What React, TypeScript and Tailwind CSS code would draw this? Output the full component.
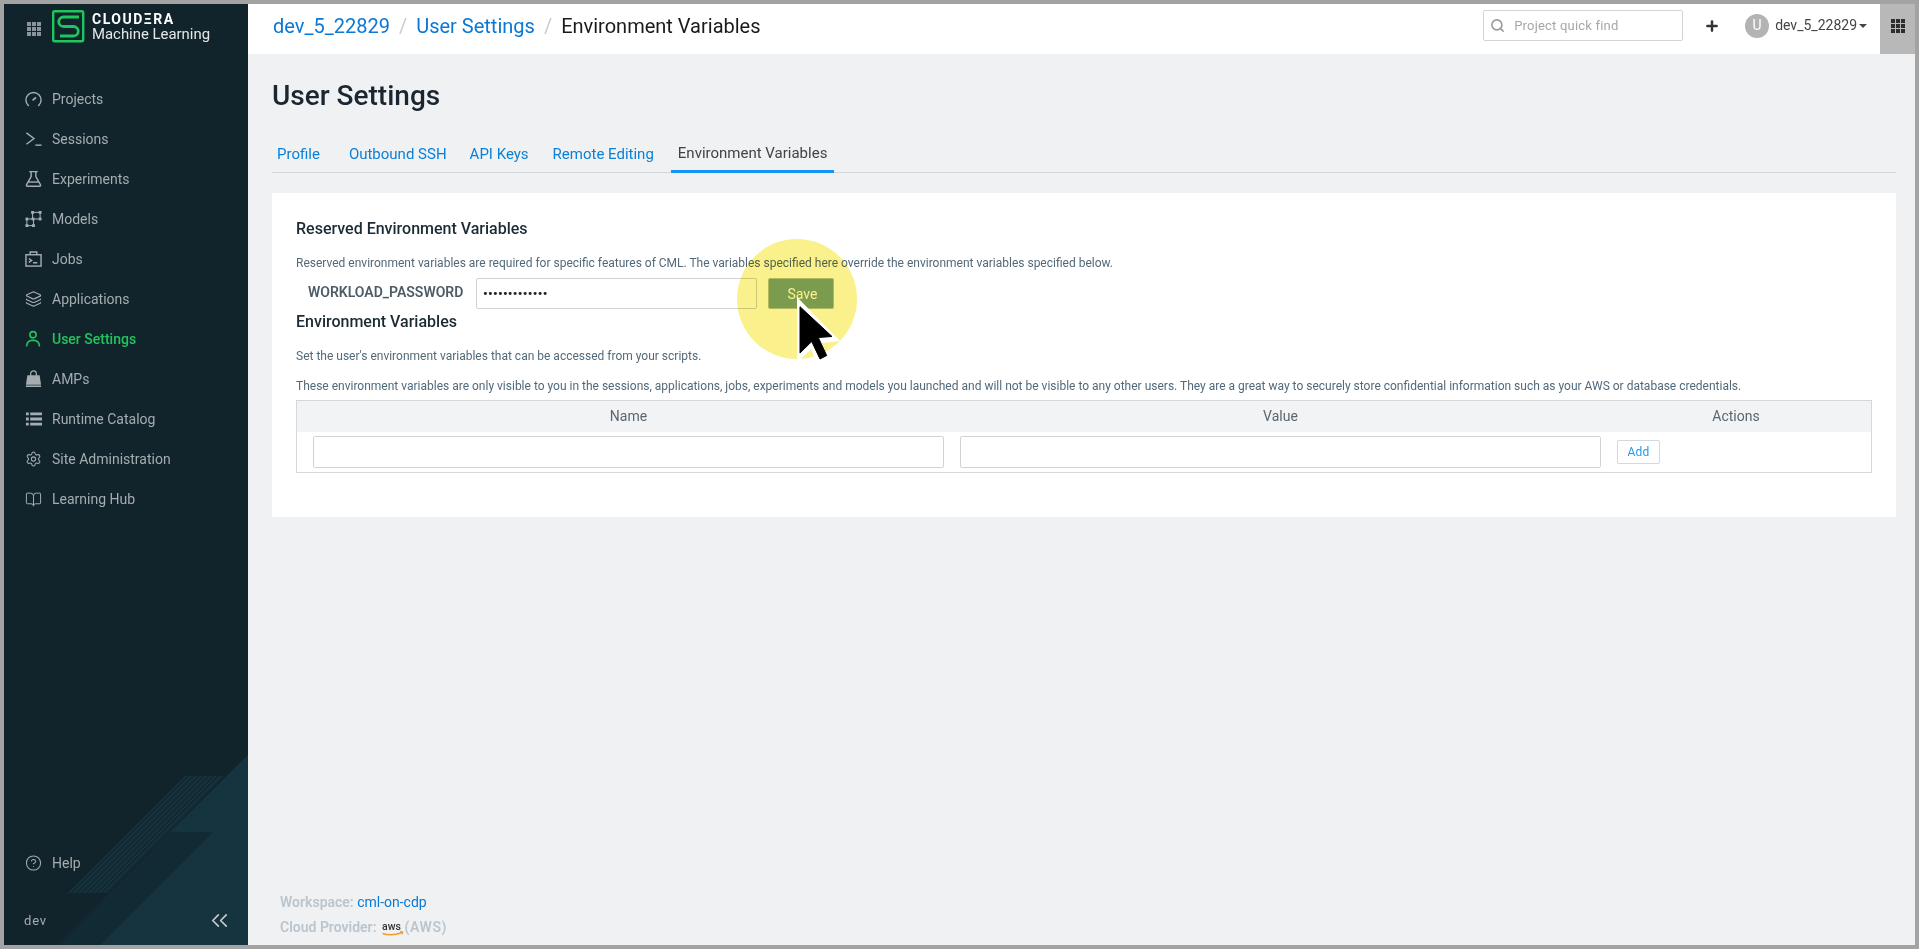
import React from "react";
import { Layers, Settings, BookOpen, CircleHelp, Search, Plus, ChevronsLeft } from "lucide-react";

const S = { fill: "none", stroke: "currentColor", strokeWidth: 1.5 } as const;

const GaugeI = () => (
  <svg width="18" height="18" viewBox="0 0 18 18" {...S}>
    <path d="M3.600 16A8 8 0 1 1 14.400 16" strokeLinecap="round" />
    <path d="M8 10.400 11.600 7.400" strokeWidth="1.800" />
  </svg>
);
const SessI = () => (
  <svg width="18" height="18" viewBox="0 0 18 18" {...S}>
    <path d="M1.500 2.500 9.500 8.500 1.500 14.500" />
    <path d="M11 15.500h6.500" />
  </svg>
);
const FlaskI = () => (
  <svg width="18" height="18" viewBox="0 0 18 18" {...S}>
    <path d="M4.500 1.200h9M6.500 1.200v5.300L1.600 15.200q-.4 1.400 1 1.400h12.800q1.400 0 1-1.400L11.500 6.500V1.200" />
    <path d="M3.500 12.200h11" />
  </svg>
);
const ModelsI = () => (
  <svg width="18" height="18" viewBox="0 0 18 18" fill="none" stroke="currentColor" strokeWidth="1.100">
    <rect x="8" y="2" width="8" height="7" />
    <rect x="2" y="9" width="7" height="7" />
    <g fill="currentColor" stroke="none">
      {[[8, 2], [16, 2], [16, 9], [8.500, 9], [2, 9], [2, 16], [9, 16]].map(([x, y]) => (
        <rect key={`${x}-${y}`} x={x - 1.500} y={y - 1.500} width="3" height="3" />
      ))}
    </g>
  </svg>
);
const JobsI = () => (
  <svg width="18" height="18" viewBox="0 0 18 18" {...S}>
    <rect x="1" y="4.500" width="16" height="12" />
    <path d="M5.500 4.500V1.500h7v3M4 8.500l3 2-3 2M8.500 13h4.500" />
  </svg>
);
const UserI = () => (
  <svg width="18" height="18" viewBox="0 0 18 18" {...S} strokeWidth="1.700">
    <circle cx="8.500" cy="4.500" r="3.300" />
    <path d="M1.800 17v-1.200A5.500 5.500 0 0 1 7.300 10.400h2.400a5.500 5.500 0 0 1 5.500 5.400V17" />
  </svg>
);
const BagI = () => (
  <svg width="18" height="18" viewBox="0 0 18 18">
    <path d="M6 6V3.500a3 3 0 0 1 6 0V6" fill="none" stroke="currentColor" strokeWidth="1.300" />
    <path d="M2.500 5h13L17 15H1Z" fill="currentColor" />
    <path d="M1 15.800h16v1.700H1Z" fill="currentColor" />
  </svg>
);
const ListI = () => (
  <svg width="18" height="18" viewBox="0 0 18 18" fill="currentColor">
    <path d="M1 2h3v3H1ZM5.500 2H18v3H5.500ZM1 7.500h3v3H1ZM5.500 7.500H18v3H5.500ZM1 13h3v3H1ZM5.500 13H18v3H5.500Z" />
  </svg>
);
const Dots = ({ size = 14 }: { size?: number }) => (
  <svg width={size} height={size} viewBox="0 0 14 14" fill="currentColor">
    {[0, 5, 10].map((y) => [0, 5, 10].map((x) => <rect key={`${x}${y}`} x={x} y={y} width="4" height="4" />))}
  </svg>
);

const items: { label: string; icon: React.ReactNode; active?: boolean }[] = [
  { label: "Projects", icon: <GaugeI /> },
  { label: "Sessions", icon: <SessI /> },
  { label: "Experiments", icon: <FlaskI /> },
  { label: "Models", icon: <ModelsI /> },
  { label: "Jobs", icon: <JobsI /> },
  { label: "Applications", icon: <Layers size={20} strokeWidth={1.600} /> },
  { label: "User Settings", icon: <UserI />, active: true },
  { label: "AMPs", icon: <BagI /> },
  { label: "Runtime Catalog", icon: <ListI /> },
  { label: "Site Administration", icon: <Settings size={20} strokeWidth={1.500} /> },
  { label: "Learning Hub", icon: <BookOpen size={21} strokeWidth={1.400} /> },
];

function NavItem({ label, icon, active }: { label: string; icon: React.ReactNode; active?: boolean }) {
  return (
    <div className={`flex h-[40px] items-center pl-[21px] text-[14px] ${active ? "font-medium text-[#21c55d]" : "text-[#a4adb1]"}`}>
      <span className="mr-[10px] flex w-[17px] shrink-0 justify-center">{icon}</span>
      <span>{label}</span>
    </div>
  );
}

function Sidebar() {
  return (
    <aside className="relative flex w-[244px] shrink-0 flex-col overflow-hidden bg-[#12242b]">
      <svg className="absolute bottom-0 left-0" width="244" height="200" viewBox="4 745 244 200">
        <path d="M248 755 170 832H213L100 945H248Z" fill="#15343f" />
        <path d="M170 832H213L100 945H58Z" fill="#122a33" />
        <path d="M185 776H225L108 893H68Z" fill="#122a33" />
        <g stroke="#1b3a44" strokeWidth="1">
          {[0, 5, 10, 15, 20, 25, 30, 35].map((d) => (
            <path key={d} d={`M${186 + d} 776 ${69 + d} 893`} />
          ))}
        </g>
      </svg>
      <div className="relative flex h-[48px] items-start pt-[6px]">
        <span className="ml-[23px] mt-[12px] text-[#8b9599]">
          <Dots size={14} />
        </span>
        <svg className="ml-[11px]" width="33" height="33" viewBox="0 0 33 33" fill="none" stroke="#21c55d" strokeWidth="2.400">
          <rect x="1.200" y="1.200" width="30" height="30" rx="1.500" />
          <path d="M27 7H11.500a4.500 4.500 0 0 0 0 9.500h10a4.500 4.500 0 0 1 0 9.500H8" strokeWidth="2.800" />
        </svg>
        <div className="ml-[7px] mt-[2px] flex flex-col text-white">
          <span className="text-[14px] font-bold leading-[14px] tracking-[1.500px]">CLOUDΞRA</span>
          <span className="text-[14.900px] leading-[17px] text-[#e4e7e8]">Machine Learning</span>
        </div>
      </div>
      <nav className="relative mt-[27px] flex flex-col">
        {items.map((i) => (
          <NavItem key={i.label} {...i} />
        ))}
      </nav>
      <div className="flex-1" />
      <div className="relative">
        <NavItem label="Help" icon={<CircleHelp size={20} strokeWidth={1.500} />} />
        <div className="mt-[22px] flex h-[40px] items-start justify-between pl-[20px] pr-[15px] pt-[2px] text-[#a4adb1]">
          <span className="pt-[4px] text-[13px] tracking-[0.800px]">dev</span>
          <ChevronsLeft size={27} strokeWidth={1.500} className="text-[#c5cacc]" />
        </div>
      </div>
    </aside>
  );
}

function Header() {
  return (
    <header className="flex h-[50px] shrink-0 items-stretch bg-white">
      <div className="flex flex-1 items-center pb-[7px]">
        <div className="ml-[25px] flex items-center text-[20px]">
          <span className="text-[#0a78d4]">dev_5_22829</span>
          <span className="mx-[9px] text-[#c8cdd0]">/</span>
          <span className="text-[#0a78d4]">User Settings</span>
          <span className="mx-[9px] text-[#c8cdd0]">/</span>
          <span className="text-[#1a1a1a]">Environment Variables</span>
        </div>
        <div className="flex-1" />
        <div className="flex h-[31px] w-[200px] items-center rounded-[2px] border border-[#cfd5d9] pl-[6px] text-[13px] text-[#a7a7a7]">
          <Search size={15} strokeWidth={2.500} className="mr-[9px] text-[#9a9a9a]" />
          <span className="tracking-[0.200px]">Project quick find</span>
        </div>
        <Plus size={16} strokeWidth={3.600} className="ml-[21px] text-[#333]" />
        <span className="ml-[25px] flex h-[24px] w-[24px] items-center justify-center rounded-full bg-[#b3b3b3] text-[14px] text-white">U</span>
        <span className="ml-[6px] text-[14px] text-[#444]">dev_5_22829</span>
        <span className="ml-[2px] h-0 w-0 border-x-[4px] border-t-[4px] border-x-transparent border-t-[#444]" />
        <span className="w-[13px]" />
      </div>
      <div className="flex w-[35px] items-center justify-center bg-[#b8b8b8] pb-[7px] text-[#2e2e2e]">
        <Dots size={14} />
      </div>
    </header>
  );
}

const inputCls = "rounded-[2px] border border-[#cfd3d6] bg-white";

function Card() {
  return (
    <section className="mt-[20px] bg-white px-[24px] pb-[44px] pt-[25px]">
      <h2 className="text-[16px] font-medium leading-[22px] text-[#1b2a33]">Reserved Environment Variables</h2>
      <p className="mt-[15px] text-[12px] leading-[16px] text-[#52697a]">
        Reserved environment variables are required for specific features of CML. The variables specified here override the environment variables specified below.
      </p>
      <div className="mt-[7px] flex h-[31px] items-center pl-[12px]">
        <span className="w-[168px] pb-[2px] text-[14px] font-semibold text-[#4d5c66]">WORKLOAD_PASSWORD</span>
        <div className={`${inputCls} flex h-full w-[281px] items-center pl-[6px] text-[13px] font-bold tracking-[0.300px] text-[#222]`}>•••••••••••••</div>
        <button className="ml-[11px] h-full w-[66px] rounded-[2px] border border-[#b7c2a8] bg-[#7da48f] pl-[3px] pt-[2px] text-[14px] text-white">Save</button>
      </div>
      <h2 className="mt-[2px] text-[16px] font-medium leading-[22px] text-[#1b2a33]">Environment Variables</h2>
      <p className="mt-[15px] text-[12px] leading-[16px] text-[#52697a]">Set the user's environment variables that can be accessed from your scripts.</p>
      <p className="mt-[14px] text-[12px] leading-[16px] text-[#52697a]">
        These environment variables are only visible to you in the sessions, applications, jobs, experiments and models you launched and will not be visible to any other users. They are a great way to securely store confidential information such as your AWS or database credentials.
      </p>
      <div className="mt-[6px] h-[73px] border border-[#d5d8da]">
        <div className="grid h-[31px] grid-cols-[663px_641px_1fr] items-center bg-[#f2f3f5] text-center text-[14px] text-[#5a6670]">
          <span>Name</span>
          <span>Value</span>
          <span>Actions</span>
        </div>
        <div className="grid h-[40px] grid-cols-[663px_641px_1fr] items-center">
          <div className="pl-[16px]">
            <div className={`${inputCls} h-[32px] w-[631px]`} />
          </div>
          <div>
            <div className={`${inputCls} h-[32px] w-[641px]`} />
          </div>
          <div className="pl-[16px]">
            <button className="flex h-[24px] w-[43px] items-center justify-center rounded-[2px] border border-[#d5d8da] bg-white text-[12px] tracking-[0.200px] text-[#1e9bf0]">Add</button>
          </div>
        </div>
      </div>
    </section>
  );
}

function AwsLogo() {
  return (
    <svg width="22" height="16" viewBox="0 0 22 16" className="ml-[6px] inline-block">
      <path d="M0.500 13.500Q10 16.500 20 12.500" fill="none" stroke="#f59a23" strokeWidth="1.400" />
      <path d="M18 11.300 21 12 20 14.500" fill="none" stroke="#f59a23" strokeWidth="1" />
      <text x="0" y="10" fontSize="10.500" fontFamily="Roboto, sans-serif" fontWeight="500" fill="#333">aws</text>
    </svg>
  );
}

function Main() {
  return (
    <main className="flex min-w-0 flex-1 flex-col bg-[#f0f1f3]">
      <Header />
      <div className="flex flex-1 flex-col pl-[24px] pr-[19px]">
        <h1 className="mt-[25px] text-[28px] font-medium leading-[34px] text-[#1b2630]">User Settings</h1>
        <div className="mt-[21px] flex h-[39px] items-stretch border-b border-[#d3d6d9] pt-[2px] text-[15px]">
          <span className="ml-[5px] mr-[29px] flex items-center text-[#0a7fd6]">Profile</span>
          <span className="mr-[23px] flex items-center text-[#0a7fd6]">Outbound SSH</span>
          <span className="mr-[24px] flex items-center text-[#0a7fd6]">API Keys</span>
          <span className="mr-[17px] flex items-center text-[#0a7fd6]">Remote Editing</span>
          <span className="-mb-px flex items-center border-b-[3px] border-[#1696f3] px-[7px] text-[#3f4448]">Environment Variables</span>
        </div>
        <Card />
        <div className="flex-1" />
        <div className="flex flex-col pb-[5px] pl-[8px] text-[14px] font-semibold text-[#bac5cd]">
          <div className="h-[25px] leading-[25px]">
            Workspace: <span className="font-normal text-[#0a78d4]">cml-on-cdp</span>
          </div>
          <div className="flex h-[25px] items-center">
            Cloud Provider:
            <AwsLogo />
            <span className="tracking-[0.600px]">(AWS)</span>
          </div>
        </div>
      </div>
    </main>
  );
}

export default function App() {
  return (
    <div className="relative h-[949px] w-[1919px] overflow-hidden bg-[#a3a3a3] p-[4px]" style={{ fontFamily: "Roboto, sans-serif" }}>
      <div className="flex h-full w-full">
        <Sidebar />
        <Main />
      </div>
      {/* click highlight and cursor */}
      <div className="pointer-events-none absolute left-[737px] top-[239px] h-[120px] w-[120px] rounded-full bg-[#faf18c] mix-blend-multiply" />
      <svg className="pointer-events-none absolute left-[790px] top-[290px]" width="60" height="80" viewBox="790 290 60 80">
        <path d="M797 297V363L811 349 818 366 829 361 822 343 840 341Z" fill="#fff" />
        <path d="M800 306.700V353L811.700 341.500 820 359 826.700 355.500 818.300 337.500 832 336.500Z" fill="#000" stroke="#000" strokeLinejoin="round" />
      </svg>
    </div>
  );
}
